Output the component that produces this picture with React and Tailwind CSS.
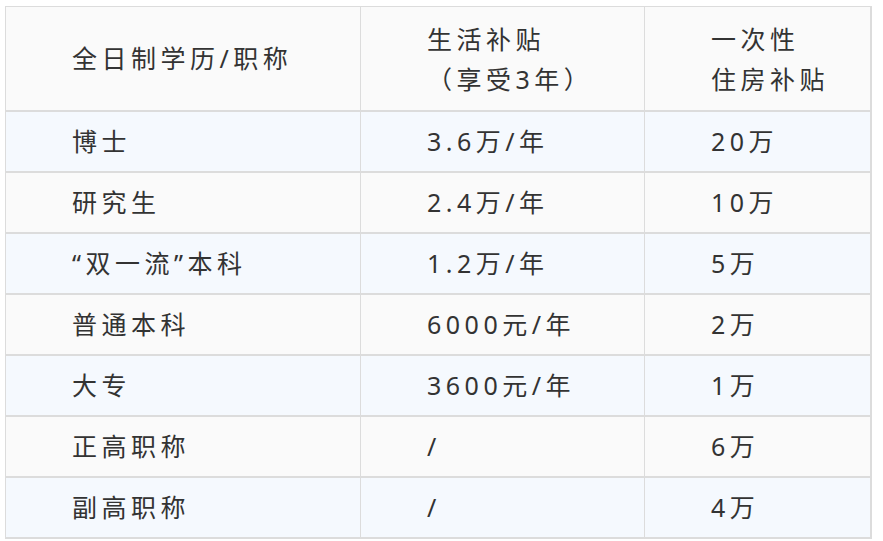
const rows = [
  ['博士', '3.6万/年', '20万'],
  ['研究生', '2.4万/年', '10万'],
  ['“双一流”本科', '1.2万/年', '5万'],
  ['普通本科', '6000元/年', '2万'],
  ['大专', '3600元/年', '1万'],
  ['正高职称', '/', '6万'],
  ['副高职称', '/', '4万'],
]

const Cell = ({ className = '', children }) => (
  <div className={`flex items-center pl-[66px] ${className}`}>{children}</div>
)

export default function App() {
  return (
    <div className="min-h-[541px] bg-white pl-[5px] pt-[6px] font-['Noto_Sans','Noto_Sans_CJK_SC',sans-serif] text-[25px] tracking-[4.5px] text-[#333333]">
      <div className="w-[867px] border-t border-l border-r-2 border-[#dcdcdc]">
        <div className="flex h-[105px] border-b-2 border-[#dcdcdc] bg-[#fafafa]">
          <Cell className="w-[355px] border-r border-[#dcdcdc]">全日制学历/职称</Cell>
          <Cell className="w-[284px] border-r border-[#dcdcdc] leading-[40px]">
            <div>
              <div>生活补贴</div>
              <div>（享受3年）</div>
            </div>
          </Cell>
          <Cell className="flex-1 leading-[40px]">
            <div>
              <div>一次性</div>
              <div>住房补贴</div>
            </div>
          </Cell>
        </div>
        {rows.map((r, i) => (
          <div
            key={r[0]}
            className={`flex h-[61px] border-b-2 border-[#dcdcdc] ${i % 2 === 0 ? 'bg-[#f5f9fe]' : 'bg-[#fafafa]'}`}
          >
            <Cell className="w-[355px] border-r border-[#dcdcdc]">{r[0]}</Cell>
            <Cell className="w-[284px] border-r border-[#dcdcdc]">{r[1]}</Cell>
            <Cell className="flex-1">{r[2]}</Cell>
          </div>
        ))}
      </div>
    </div>
  )
}
